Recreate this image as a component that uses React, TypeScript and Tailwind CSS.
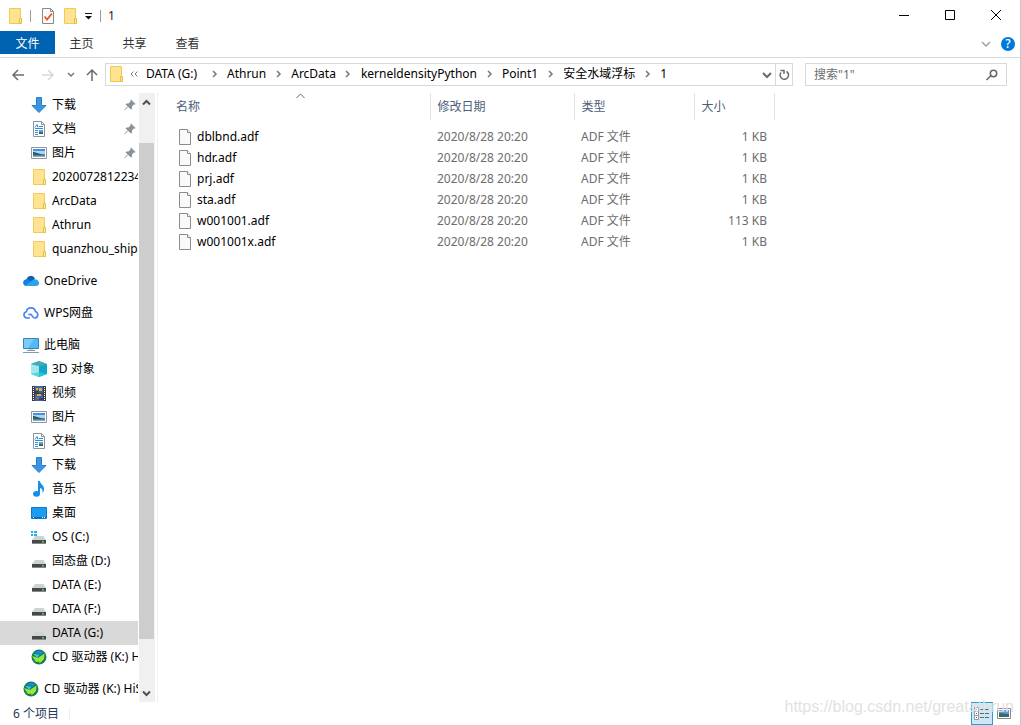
import React from "react";

type IconProps = { className?: string };

function FolderIcon({ className = "h-4 w-4" }: IconProps) {
  return (
    <svg viewBox="0 0 16 16" className={`shrink-0 ${className}`} aria-hidden="true">
      <path d="M2.5.5h11v15h-11z" fill="#ffe392" stroke="#eecb54" />
      <path d="M12.5 10.5h2v5h-2z" fill="#ffe9a8" stroke="#e6bd3c" />
    </svg>
  );
}

function DownloadIcon() {
  return (
    <svg viewBox="0 0 16 16" className="h-4 w-4 shrink-0" aria-hidden="true">
      <path d="M5.5.5h5v8h4.5l-7 7-7-7h4.5z" fill="#3a96e4" stroke="#2a7fcb" />
    </svg>
  );
}

function DocumentIcon() {
  return (
    <svg viewBox="0 0 16 16" className="h-4 w-4 shrink-0" aria-hidden="true">
      <path d="M2.5.5h8l3 3v12h-11z" fill="#fff" stroke="#8d9499" />
      <path d="M10.5.5v3h3" fill="none" stroke="#8d9499" />
      <path d="M4 6.5l2-3 1 3M8 5.5h4M4 7.5h8M4 9.5h3M4 11.5h3M4 13.5h3" stroke="#2b8fd6" fill="none" />
      <path d="M8 9h4v2H8z" fill="#5aa3d8" />
      <path d="M8 11h4v2H8z" fill="#3d6b58" />
    </svg>
  );
}

function PictureIcon() {
  return (
    <svg viewBox="0 0 16 16" className="h-4 w-4 shrink-0" aria-hidden="true">
      <path d="M.5 2.5h15v11H.5z" fill="#fff" stroke="#8f979d" />
      <path d="M2 4h12v8H2z" fill="#a9d4f5" />
      <path d="M2 4h12v2H2z" fill="#4a8de0" />
      <path d="M2 7c3 0 5 2 12 2.500V11H2z" fill="#2f5f66" />
      <path d="M2 10.500h12V12H2z" fill="#7fb0cc" />
    </svg>
  );
}

function OneDriveIcon() {
  return (
    <svg viewBox="0 0 16 16" className="h-4 w-4 shrink-0" aria-hidden="true">
      <path d="M3.500 6.500a4.500 4.500 0 0 1 8.500-1l-3 3-5 4z" fill="#0b62b5" />
      <path d="M3.500 13a3.400 3.400 0 1 1 1.800-6.300l6 2.300-2 4z" fill="#1580d5" />
      <path d="M2 12.600l9-6.200c2-.7 5 .8 5 3.700 0 2-1.400 3-3 3H3.500z" fill="#28a4ec" />
    </svg>
  );
}

function WpsCloudIcon() {
  return (
    <svg viewBox="0 0 16 16" className="h-4 w-4 shrink-0" fill="none" stroke="#4a83f5" strokeWidth="1.600" aria-hidden="true">
      <path d="M7 13H4a3.200 3.200 0 0 1-.6-6.300 4.600 4.600 0 0 1 9-.3A3.400 3.400 0 0 1 12 13c-2 0-2.300-1.500-3.200-2.800-.7-1-2.200-1.200-3.300-.2" />
    </svg>
  );
}

function ComputerIcon() {
  return (
    <svg viewBox="0 0 16 16" className="h-4 w-4 shrink-0" aria-hidden="true">
      <path d="M.5 1.500h15v10H.500z" fill="#55b9f9" stroke="#3c85ae" />
      <path d="M1 2h10L5 11H1z" fill="#7bcbfd" />
      <path d="M6 12h4v1H6z" fill="#c5d3dc" />
      <path d="M4 13.500h8M0 15.500h16" stroke="#7f9cb0" />
    </svg>
  );
}

function CubeIcon() {
  return (
    <svg viewBox="0 0 16 16" className="h-4 w-4 shrink-0" aria-hidden="true">
      <path d="M0 3l8-3 8 3v10l-8 3-8-3z" fill="#36bfd0" />
      <path d="M0 3l8 2v7l-8 1z" fill="#a2e8ea" />
      <path d="M8 5l8-2v10l-8-1z" fill="#12a6c4" />
      <path d="M0 3l8-3 8 3-8 2z" fill="#45aab5" />
      <path d="M0 13l8-2v5z" fill="#63d3dc" />
      <path d="M8 11l8 2-8 3z" fill="#1fc3e0" />
    </svg>
  );
}

function VideoIcon() {
  return (
    <svg viewBox="0 0 16 16" className="h-4 w-4 shrink-0" aria-hidden="true">
      <path d="M1 1h14v15H1z" fill="#3b3b3b" />
      <path d="M4 1h8v7H4zM4 9h8v7H4z" fill="#3e63b5" />
      <path d="M5 3h2v2H5zM8 3h3v3H8zM6 9h4v2H6z" fill="#e3b32c" />
      <path d="M4 6h4v2H4zM8 13h4v2H8z" fill="#2c3f80" />
      <path d="M5 12h3v2H5z" fill="#96712c" />
      <path d="M2.500 2v13M13.500 2v13" stroke="#fff" strokeDasharray="1 1" />
    </svg>
  );
}

function MusicIcon() {
  return (
    <svg viewBox="0 0 16 16" className="h-4 w-4 shrink-0" aria-hidden="true">
      <ellipse cx="5.500" cy="12.800" rx="3.500" ry="2.900" fill="#1590e8" />
      <path d="M7 0h2c0 3 4 4 4 8 0 1.600-.6 3-1.500 4 .5-3-.6-4.500-2.500-5v6H7z" fill="#1590e8" />
    </svg>
  );
}

function DesktopIcon() {
  return (
    <svg viewBox="0 0 16 16" className="h-4 w-4 shrink-0" aria-hidden="true">
      <path d="M.5 2.500h15v11H.500z" fill="#1b9cf5" stroke="#1278c4" />
      <path d="M1 12.500h14" stroke="#0e66ad" />
      <path d="M2 12.500h1M11 12.500h1M13 12.500h1" stroke="#fff" />
    </svg>
  );
}

function DriveIcon({ system = false }: { system?: boolean }) {
  return (
    <svg viewBox="0 0 16 16" className="h-4 w-4 shrink-0" aria-hidden="true">
      {system && <path d="M0 2h2v2H0zM3 2h3v2H3zM0 5h2v2H0zM3 5h3v2H3z" fill="#18b4f0" />}
      <path d="M4 7h8.500L15 11H1z" fill="#d0d2d3" />
      <path d="M1 11h14v4H1z" fill="#474747" />
      <path d="M1 14.500h14" stroke="#8a8a8a" />
      <path d="M11 12h2v1.500h-2z" fill="#32e05a" />
    </svg>
  );
}

function DiscIcon() {
  return (
    <svg viewBox="0 0 16 16" className="h-4 w-4 shrink-0" aria-hidden="true">
      <circle cx="8" cy="8" r="7.500" fill="#15804e" />
      <path d="M4 3.500A6.500 6.500 0 0 1 12.500 3L9 6.500z" fill="#1687dc" />
      <path d="M1 7l6 2 6.500-4.500-.5 5.500-4 4-1.500-1.500L5 13z" fill="#9be83c" />
      <path d="M2 4.500l6 1.500L6.500 9z" fill="#42c6ee" />
    </svg>
  );
}

function FileIcon() {
  return (
    <svg viewBox="0 0 16 16" className="h-4 w-4 shrink-0" aria-hidden="true">
      <path d="M1.5.5h8l3 3v12h-11z" fill="#f9f9f9" stroke="#8c8c8c" />
      <path d="M9.5.5v3h3" fill="#fff" stroke="#8c8c8c" />
    </svg>
  );
}

function PinIcon() {
  return (
    <svg viewBox="0 0 12 12" className="h-3 w-3 shrink-0" aria-hidden="true">
      <path d="M7 .5L11.500 5l-1 .8-.8-.2L8 7.500v2l-1 1L1.500 5.500l1-1h2L6.500 2.500 6.300 1.300z" fill="#87929b" />
      <path d="M4 7.500L.5 11" stroke="#87929b" />
    </svg>
  );
}

type StrokeProps = { d: string; className?: string; strokeWidth?: number };

function Stroke({ d, className = "", strokeWidth = 1.5 }: StrokeProps) {
  return (
    <svg viewBox="0 0 16 16" className={`h-4 w-4 shrink-0 ${className}`} fill="none" stroke="currentColor" strokeWidth={strokeWidth} aria-hidden="true">
      <path d={d} />
    </svg>
  );
}

type Node = {
  label: string;
  icon: React.ReactNode;
  root?: boolean;
  pinned?: boolean;
  selected?: boolean;
};

const groups: Node[][] = [
  [
    { label: "下载", icon: <DownloadIcon />, pinned: true },
    { label: "文档", icon: <DocumentIcon />, pinned: true },
    { label: "图片", icon: <PictureIcon />, pinned: true },
    { label: "20200728122345", icon: <FolderIcon /> },
    { label: "ArcData", icon: <FolderIcon /> },
    { label: "Athrun", icon: <FolderIcon /> },
    { label: "quanzhou_ship", icon: <FolderIcon /> },
  ],
  [{ label: "OneDrive", icon: <OneDriveIcon />, root: true }],
  [{ label: "WPS网盘", icon: <WpsCloudIcon />, root: true }],
  [
    { label: "此电脑", icon: <ComputerIcon />, root: true },
    { label: "3D 对象", icon: <CubeIcon /> },
    { label: "视频", icon: <VideoIcon /> },
    { label: "图片", icon: <PictureIcon /> },
    { label: "文档", icon: <DocumentIcon /> },
    { label: "下载", icon: <DownloadIcon /> },
    { label: "音乐", icon: <MusicIcon /> },
    { label: "桌面", icon: <DesktopIcon /> },
    { label: "OS (C:)", icon: <DriveIcon system /> },
    { label: "固态盘 (D:)", icon: <DriveIcon /> },
    { label: "DATA (E:)", icon: <DriveIcon /> },
    { label: "DATA (F:)", icon: <DriveIcon /> },
    { label: "DATA (G:)", icon: <DriveIcon />, selected: true },
    { label: "CD 驱动器 (K:) HiSuite", icon: <DiscIcon /> },
  ],
  [{ label: "CD 驱动器 (K:) HiSuite", icon: <DiscIcon />, root: true }],
];

const crumbs = ["DATA (G:)", "Athrun", "ArcData", "kerneldensityPython", "Point1", "安全水域浮标", "1"];

const files = [
  { name: "dblbnd.adf", size: "1 KB" },
  { name: "hdr.adf", size: "1 KB" },
  { name: "prj.adf", size: "1 KB" },
  { name: "sta.adf", size: "1 KB" },
  { name: "w001001.adf", size: "113 KB" },
  { name: "w001001x.adf", size: "1 KB" },
];

function TitleBar() {
  return (
    <header className="flex h-[31px] shrink-0 items-center pr-px pl-[7px]">
      <FolderIcon />
      <span className="ml-[7px] h-3 w-px bg-[#9a9a9a]" />
      <button aria-label="属性" className="ml-2.5">
        <svg viewBox="0 0 14 16" className="h-4 w-3.5" aria-hidden="true">
          <path d="M1.5.5h8l3 3v12h-11z" fill="#fafafa" stroke="#8a8a8a" />
          <path d="M9.5.5v3h3" fill="none" stroke="#8a8a8a" />
          <path d="M3.500 8.500l2.500 3 5-6" fill="none" stroke="#e8562a" strokeWidth="1.800" />
        </svg>
      </button>
      <button aria-label="新建文件夹" className="ml-[7px]">
        <FolderIcon />
      </button>
      <button aria-label="自定义快速访问工具栏" className="ml-1.5">
        <svg viewBox="0 0 9 8" className="h-2 w-[9px]" aria-hidden="true">
          <path d="M1 1.500h7" stroke="#111" />
          <path d="M1 4h7L4.500 7.500z" fill="#111" />
        </svg>
      </button>
      <span className="ml-[7px] h-3 w-px bg-[#9a9a9a]" />
      <h1 className="ml-[7px]">1</h1>
      <div className="ml-auto flex h-full text-black">
        <button aria-label="最小化" className="flex w-[46px] items-center justify-center">
          <Stroke d="M3 7.500h10" strokeWidth={1} />
        </button>
        <button aria-label="最大化" className="flex w-[46px] items-center justify-center">
          <Stroke d="M3.500 2.500h9v9h-9z" strokeWidth={1} />
        </button>
        <button aria-label="关闭" className="flex w-[46px] items-center justify-center">
          <Stroke d="M3 2l10 10M13 2L3 12" strokeWidth={1} />
        </button>
      </div>
    </header>
  );
}

function RibbonTabs() {
  return (
    <nav className="flex h-[27px] shrink-0 items-start border-b border-[#dadbdc] text-[#333]">
      <button className="h-[23px] w-[55px] bg-[#0063b1] pt-0.5 text-white">文件</button>
      <button className="h-[23px] w-[53px] pt-0.5">主页</button>
      <button className="h-[23px] w-[53px] pt-0.5">共享</button>
      <button className="h-[23px] w-[53px] pt-0.5">查看</button>
      <button aria-label="展开功能区" className="ml-auto flex h-[26px] w-5 items-center justify-center">
        <Stroke d="M4 6l4 4 4-4" className="text-[#a0a0a0]" />
      </button>
      <button aria-label="帮助" className="mr-[5px] ml-[5px] flex h-[26px] items-center">
        <span className="flex h-3.5 w-3.5 items-center justify-center rounded-full bg-[#0078d7] font-medium text-white">?</span>
      </button>
    </nav>
  );
}

function AddressRow() {
  return (
    <div className="flex h-[35px] shrink-0 items-start pt-[5px] pr-[13px] pl-2.5">
      <div className="flex h-[23px] items-center">
        <button aria-label="后退">
          <Stroke d="M14 8H3M8 3L3 8l5 5" className="text-[#6b6b6b]" />
        </button>
        <button aria-label="前进" className="ml-3.5">
          <Stroke d="M2 8h11M8 3l5 5-5 5" className="text-[#d8d8d8]" />
        </button>
        <button aria-label="最近浏览的位置" className="ml-[7px]">
          <Stroke d="M5 6l3 3 3-3" className="text-[#777]" />
        </button>
        <button aria-label="上移" className="ml-[5px]">
          <Stroke d="M8 14V3M3 8l5-5 5 5" className="text-[#6b6b6b]" />
        </button>
      </div>
      <div className="ml-[5px] flex h-[23px] min-w-0 flex-1 border border-[#d9d9d9] text-black">
        <div className="flex min-w-0 flex-1 items-center pb-px pl-0.5">
          <FolderIcon />
          <Stroke d="M7.500 5.500L5 8l2.500 2.500M11.500 5.500L9 8l2.500 2.500" className="ml-0.5 text-[#777]" strokeWidth={1} />
          <ol className="ml-1 flex items-center whitespace-nowrap">
            {crumbs.map((crumb, i) => (
              <li key={crumb} className="flex items-center first:min-w-14">
                {i > 0 && (
                  <span className="flex w-[25px] justify-center">
                    <Stroke d="M6 5l3 3-3 3" className="text-[#777]" />
                  </span>
                )}
                <button>{crumb}</button>
              </li>
            ))}
          </ol>
        </div>
        <button aria-label="以前的位置" className="flex w-4 items-center justify-center">
          <Stroke d="M4 6l4 4 4-4" className="text-[#6b6b6b]" strokeWidth={2} />
        </button>
        <button aria-label="刷新" className="flex w-[17px] items-center justify-center border-l border-[#d9d9d9]">
          <Stroke d="M10.500 4.500a4.200 4.200 0 1 1-5.500 1M8.500 3.500H4.500M8 3v4" className="text-[#6b6b6b]" />
        </button>
      </div>
      <label className="ml-3 flex h-[23px] w-[202px] items-center border border-[#d9d9d9] pr-1.5 pl-2">
        <input type="text" placeholder={'搜索"1"'} aria-label="搜索" className="min-w-0 flex-1 outline-none placeholder:text-[#6d6d6d]" />
        <Stroke d="M6.500 9L2.500 13M6.300 6.500a3.200 3.200 0 1 0 6.400 0a3.200 3.200 0 1 0-6.400 0" className="text-[#666]" />
      </label>
    </div>
  );
}

function TreeRow({ node }: { node: Node }) {
  return (
    <li>
      <button
        className={`flex h-6 w-full items-center gap-[5px] overflow-hidden text-left whitespace-nowrap ${node.root ? "pl-[23px]" : "pl-[31px]"} ${node.selected ? "bg-[#d9d9d9]" : ""}`}
      >
        {node.icon}
        <span className="flex-1">{node.label}</span>
        {node.pinned && (
          <span className="pr-0.5">
            <PinIcon />
          </span>
        )}
      </button>
    </li>
  );
}

function Sidebar() {
  return (
    <aside className="flex w-[158px] shrink-0 border-r border-[#f0f0f0]">
      <nav className="flex w-[138px] flex-col gap-2 overflow-hidden text-black">
        {groups.map((group, i) => (
          <ul key={i}>
            {group.map((node) => (
              <TreeRow key={node.label} node={node} />
            ))}
          </ul>
        ))}
      </nav>
      <div className="ml-px flex w-4 flex-col bg-[#f0f0f0]">
        <button aria-label="向上滚动" className="flex h-[18px] items-center">
          <Stroke d="M4 10.500L7.500 7 11 10.500" className="text-[#505050]" strokeWidth={2} />
        </button>
        <div className="mt-8 w-[15px] flex-1 bg-[#cdcdcd]" />
        <button aria-label="向下滚动" className="mt-[45px] flex h-[18px] items-center">
          <Stroke d="M4 6.500L7.500 10 11 6.500" className="text-[#505050]" strokeWidth={2} />
        </button>
      </div>
    </aside>
  );
}

function FileTable() {
  return (
    <main className="min-w-0 flex-1 overflow-hidden pl-1.5">
      <table className="w-[610px] table-fixed">
        <colgroup>
          <col className="w-[266px]" />
          <col className="w-36" />
          <col className="w-[120px]" />
          <col className="w-20" />
        </colgroup>
        <thead className="text-left text-[#4c607a]">
          <tr className="h-[27px] *:border-r *:border-[#e5e5e5] *:font-normal">
            <th className="relative pl-3">
              名称
              <svg viewBox="0 0 9 6" className="absolute top-0 left-[132px] h-1.5 w-[9px]" fill="none" stroke="#666" aria-hidden="true">
                <path d="M.5 5l4-4 4 4" />
              </svg>
            </th>
            <th className="pl-[7px]">修改日期</th>
            <th className="pl-[7px]">类型</th>
            <th className="pl-[7px]">大小</th>
          </tr>
        </thead>
        <tbody className="text-[#6d6d6d] before:block before:h-1.5 before:content-['']">
          {files.map((file) => (
            <tr key={file.name} className="h-[21px]">
              <td className="pl-3.5">
                <span className="flex items-center gap-[3px] text-black">
                  <FileIcon />
                  {file.name}
                </span>
              </td>
              <td className="pl-[7px]">2020/8/28 20:20</td>
              <td className="pl-[7px]">ADF 文件</td>
              <td className="pr-[7px] text-right">{file.size}</td>
            </tr>
          ))}
        </tbody>
      </table>
    </main>
  );
}

function StatusBar() {
  return (
    <footer className="relative flex h-[23px] shrink-0 items-center pr-[9px] pl-[13px] text-[#1e395b]">
      <span>6 个项目</span>
      <span className="ml-2.5 h-3 w-px bg-[#efefef]" />
      <button aria-label="详细信息" className="ml-auto flex h-[23px] w-[22px] items-center justify-center border border-[#26a0da] bg-[#cce8f6]">
        <svg viewBox="0 0 16 14" className="h-3.5 w-4 shrink-0" fill="none" aria-hidden="true">
          <path d="M.5.5h4v12h-4zM.5 4.500h4M.5 8.500h4" fill="#fff" stroke="#999" />
          <path d="M6 2.500h4M11 2.500h4M6 6.500h4M11 6.500h4M6 10.500h4M11 10.500h4" stroke="#666" />
          <path d="M2 10.500h1" stroke="#d33" />
          <path d="M2 2.500h1M2 6.500h1" stroke="#3a78c8" />
        </svg>
      </button>
      <button aria-label="大图标" className="ml-1">
        <svg viewBox="0 0 14 11" className="h-[11px] w-3.5" aria-hidden="true">
          <path d="M.5.5h13v10H.5z" fill="#fff" stroke="#888" />
          <path d="M2 2h10v4H2z" fill="#5c9be8" />
          <path d="M2 5c4 0 5 1 10 1v3H2z" fill="#3c6b62" />
        </svg>
      </button>
      <span className="pointer-events-none absolute right-1.5 bottom-1.5 font-['Liberation_Sans'] text-base text-[#e2e2e2]">
        https://blog.csdn.net/greatathrun
      </span>
    </footer>
  );
}

export default function App() {
  return (
    <div className="flex h-screen flex-col overflow-hidden border-r border-[#c8c8c8] bg-white font-['Noto_Sans','Noto_Sans_CJK_SC',sans-serif] text-[12px] leading-4 text-[#222]">
      <TitleBar />
      <RibbonTabs />
      <AddressRow />
      <div className="flex min-h-0 flex-1">
        <Sidebar />
        <FileTable />
      </div>
      <StatusBar />
    </div>
  );
}
